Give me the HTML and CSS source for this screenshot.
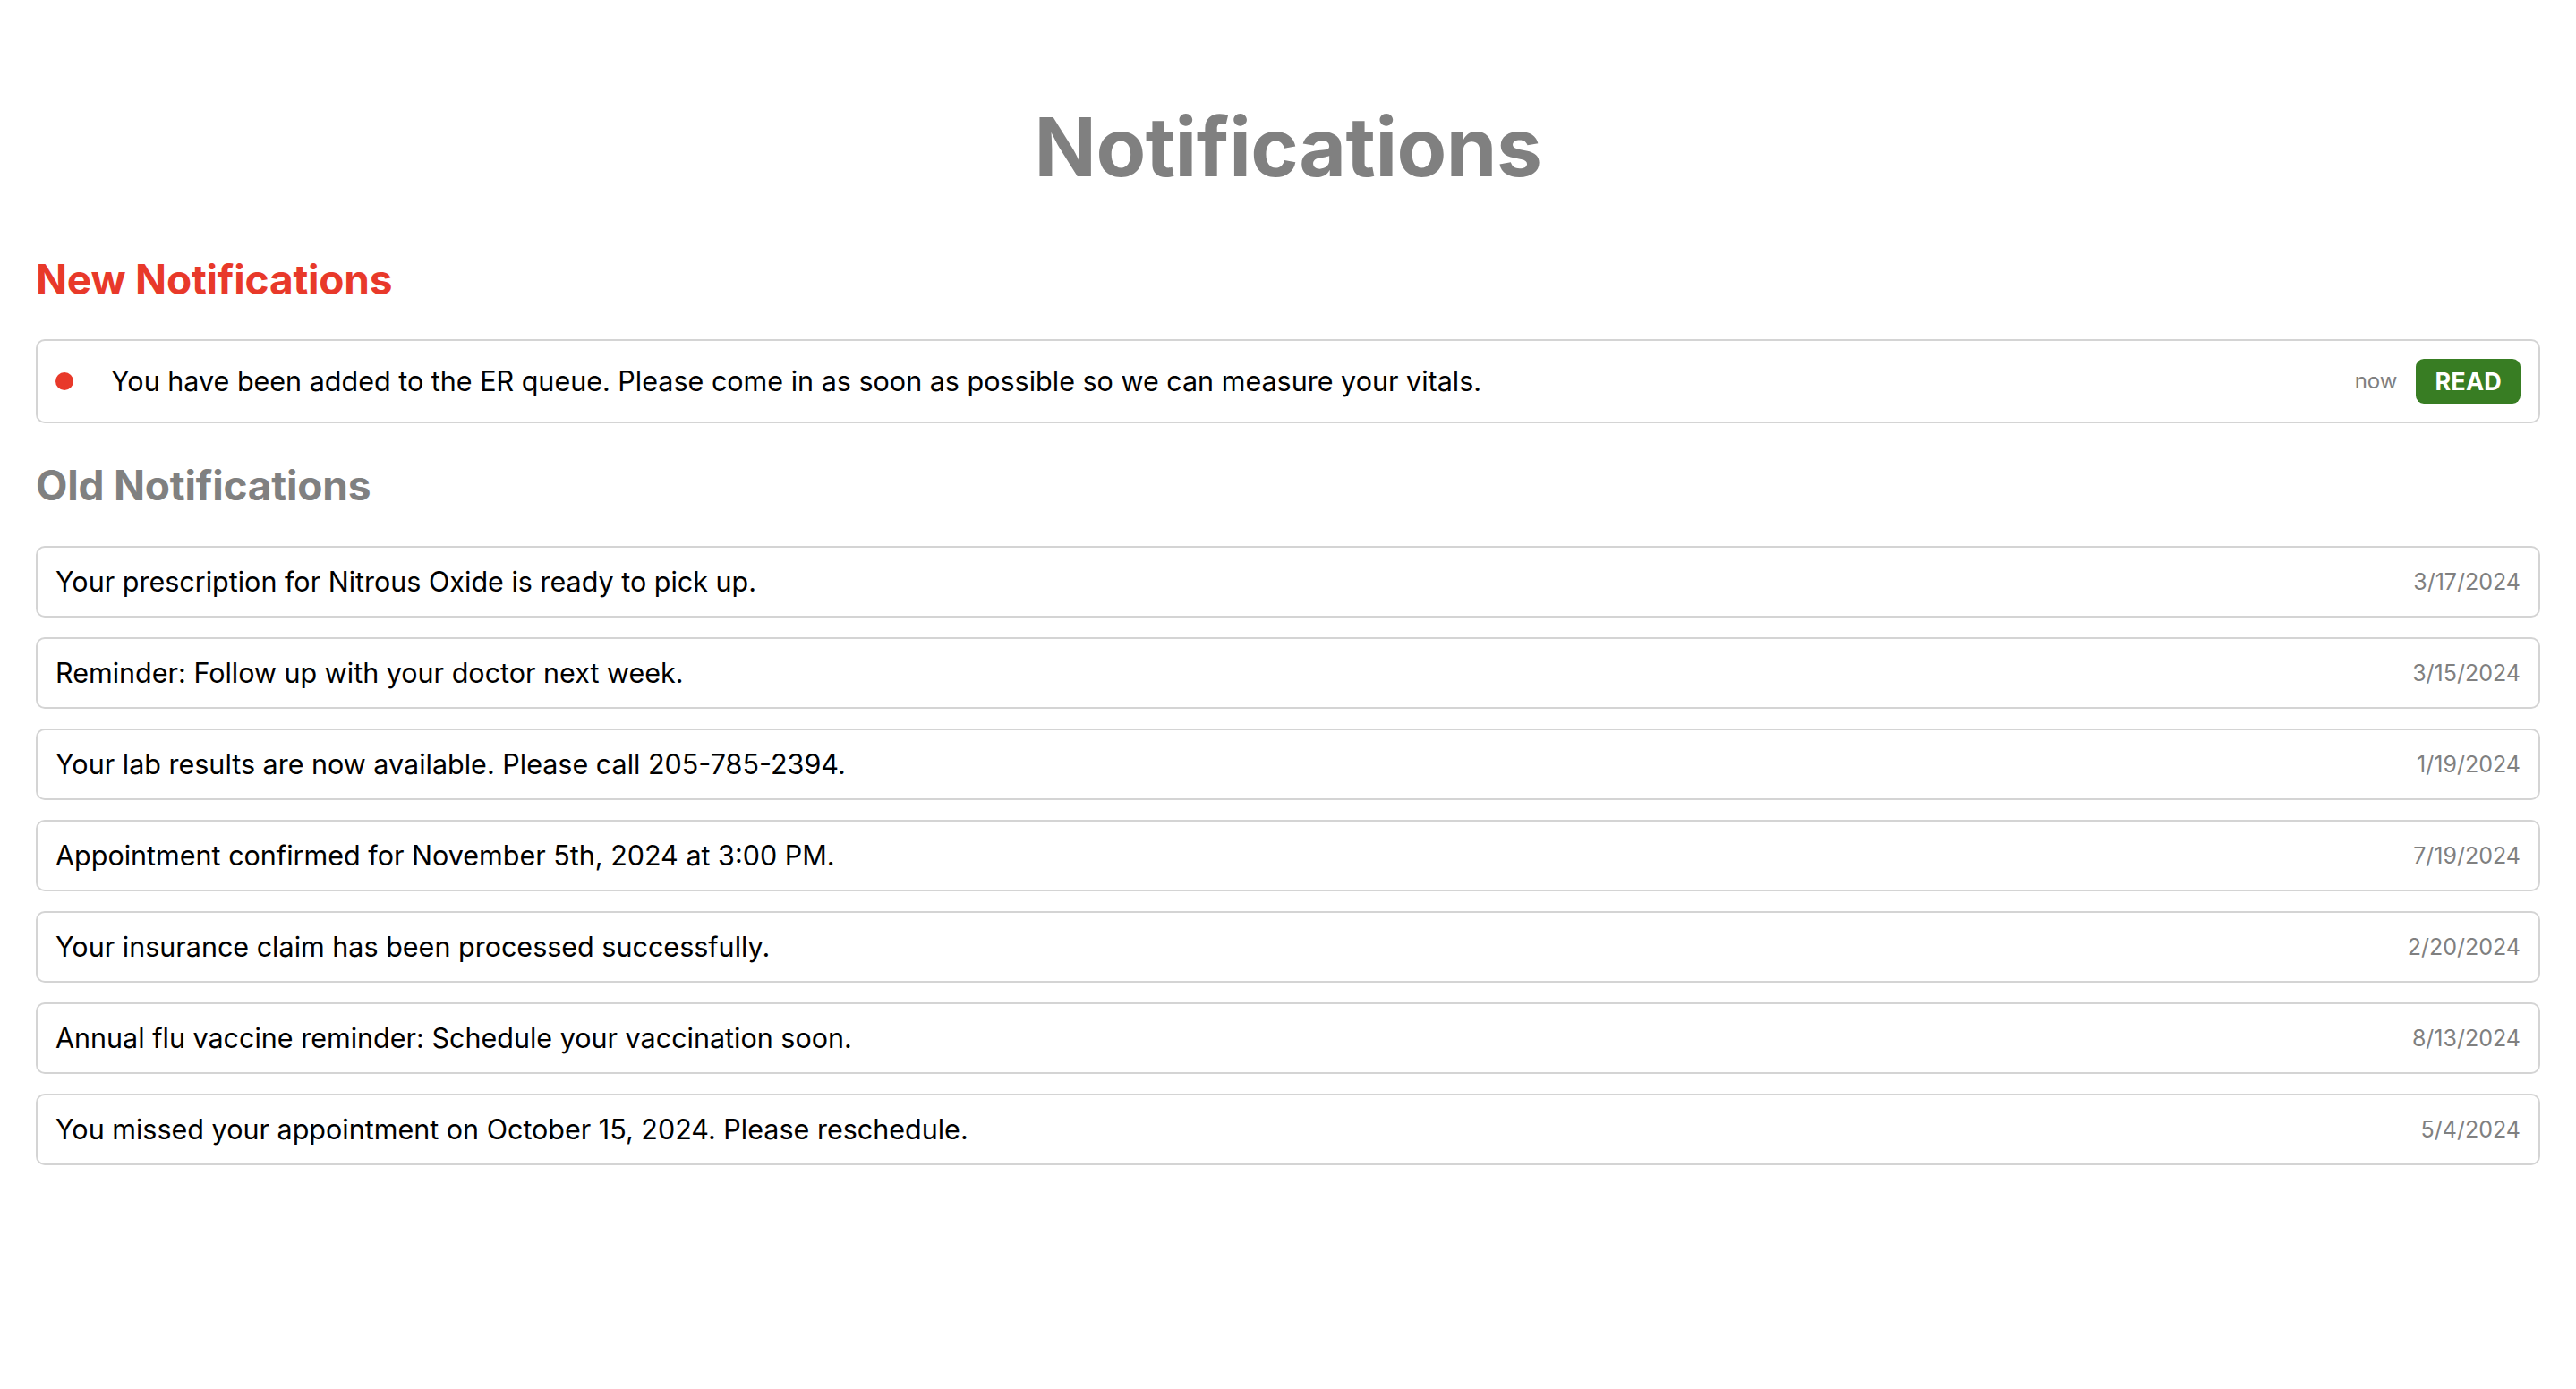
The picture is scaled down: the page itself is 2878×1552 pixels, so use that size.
FILE: index.html
```html
<!DOCTYPE html>
<html lang="en">
<head>
<meta charset="utf-8">
<title>Notifications</title>
<link rel="stylesheet" href="styles.css">
</head>
<body>
<main class="page">
  <h1 class="title">Notifications</h1>

  <section class="group">
    <h2 class="heading heading-new">New Notifications</h2>
    <ul class="list">
      <li class="card card-new">
        <span class="dot"></span>
        <span class="msg">You have been added to the ER queue. Please come in as soon as possible so we can measure your vitals.</span>
        <span class="time">now</span>
        <button class="read-btn" type="button">READ</button>
      </li>
    </ul>
  </section>

  <section class="group">
    <h2 class="heading heading-old">Old Notifications</h2>
    <ul class="list">
      <li class="card"><span class="msg">Your prescription for Nitrous Oxide is ready to pick up.</span><span class="date">3/17/2024</span></li>
      <li class="card"><span class="msg">Reminder: Follow up with your doctor next week.</span><span class="date">3/15/2024</span></li>
      <li class="card"><span class="msg">Your lab results are now available. Please call 205-785-2394.</span><span class="date">1/19/2024</span></li>
      <li class="card"><span class="msg">Appointment confirmed for November 5th, 2024 at 3:00 PM.</span><span class="date">7/19/2024</span></li>
      <li class="card"><span class="msg">Your insurance claim has been processed successfully.</span><span class="date">2/20/2024</span></li>
      <li class="card"><span class="msg">Annual flu vaccine reminder: Schedule your vaccination soon.</span><span class="date">8/13/2024</span></li>
      <li class="card"><span class="msg">You missed your appointment on October 15, 2024. Please reschedule.</span><span class="date">5/4/2024</span></li>
    </ul>
  </section>
</main>
</body>
</html>
```

FILE: styles.css
```css
* {
  box-sizing: border-box;
}

html, body {
  margin: 0;
  padding: 0;
  background: #ffffff;
}

body {
  font-family: "Inter", "Liberation Sans", sans-serif;
  color: #000000;
}

.page {
  padding: 117px 40px 40px;
}

.title {
  margin: 0;
  font-size: 91px;
  line-height: 94px;
  font-weight: 700;
  color: #808080;
  text-align: center;
  letter-spacing: -0.5px;
}

.group {
  margin: 0;
}

.heading {
  font-size: 46px;
  line-height: 47px;
  font-weight: 700;
  margin: 0;
  letter-spacing: -0.2px;
}

.heading-new {
  color: #e8392a;
  margin-top: 78px;
  margin-bottom: 43px;
}

.heading-old {
  color: #808080;
  margin-top: 46px;
  margin-bottom: 44px;
}

.list {
  list-style: none;
  margin: 0;
  padding: 0;
  display: flex;
  flex-direction: column;
  gap: 22px;
}

.card {
  display: flex;
  align-items: center;
  border: 2px solid #d4d4d4;
  border-radius: 10px;
  padding: 20px 20px;
  background: #ffffff;
}

.dot {
  flex: none;
  width: 20px;
  height: 20px;
  border-radius: 50%;
  background: #e8392a;
  margin-right: 42px;
}

.msg {
  flex: 1;
  font-size: 30.5px;
  line-height: 36px;
  color: #000000;
}

.date,
.time {
  flex: none;
  font-size: 25px;
  line-height: 36px;
  color: #808080;
}

.time {
  font-size: 24px;
  margin-right: 21px;
}

.read-btn {
  flex: none;
  height: 50px;
  padding: 0 21px;
  border: none;
  border-radius: 9px;
  background: #387d23;
  color: #ffffff;
  font-family: "Inter", "Liberation Sans", sans-serif;
  font-size: 27px;
  font-weight: 700;
  letter-spacing: 0.2px;
  cursor: pointer;
}
```
